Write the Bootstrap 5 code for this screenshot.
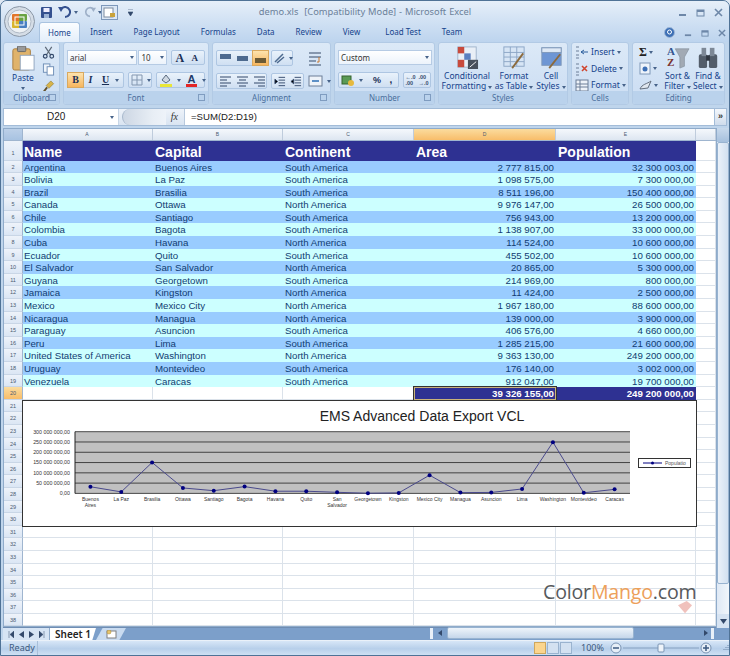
<!DOCTYPE html>
<html lang="en">
<head>
<meta charset="UTF-8">
<title>demo.xls [Compatibility Mode] - Microsoft Excel</title>
<link href="https://cdn.jsdelivr.net/npm/bootstrap@5.3.0/dist/css/bootstrap.min.css" rel="stylesheet">
<style>
html, body { margin: 0; height: 656px; overflow: hidden; background: #dfe8f3; }
svg { display: block; flex: none; }
.win { position: relative; width: 730px; height: 656px; background: #bfd5ec; border: 1px solid #4f7296; border-radius: 7px 7px 0 0; overflow: hidden; font-family: "Noto Sans", sans-serif; color: #15428b; }
.titlebar { height: 22px; background: linear-gradient(#e6eff9, #cfe0f3); padding-left: 40px; padding-right: 6px; }
.title { position: absolute; left: 0; right: 0; top: 4px; text-align: center; font-size: 9.3px; line-height: 14px; color: #6b7f99; word-spacing: .5px; }
.qat { height: 20px; gap: 2px; padding-right: 10px; }
.qat .pv { margin-left: -3px; }
.office { position: absolute; left: 3px; top: 5px; width: 31px; height: 31px; }
.wctl { margin-left: auto; gap: 9px; }
.tabsrow { height: 19px; padding-left: 38px; padding-right: 3px; background: linear-gradient(#cfe0f3, #bdd4ee); }
.tabsrow .nav-link { color: #15428b; font-size: 8px; line-height: 12px; padding: 4px 10.5px 3px; border: 0; }
.tabsrow .nav-link.active { background: linear-gradient(#fbfdff, #e3eefa); border: 1px solid #a9c3e0; border-bottom: 0; border-radius: 3px 3px 0 0; color: #15428b; padding: 4px 8px 3px; }
.ribbon { height: 63px; padding: 0 2px; gap: 3px; background: #bfd5ec; }
.grp { display: flex; flex-direction: column; height: 63px; background: linear-gradient(#dce9f7, #cfe0f4 70%); border: 1px solid #b2cae5; border-radius: 3px; flex: none; }
.grp-body { flex: 1; position: relative; padding: 7px 3px 0; min-height: 0; }
.two-rows { display: flex; flex-direction: column; gap: 7px; }
.grp-label { height: 13px; background: #bad2ec; font-size: 8px; line-height: 13px; text-align: center; color: #4a6f9c; position: relative; border-radius: 0 0 2px 2px; }
.launch { position: absolute; right: 3px; top: 3px; width: 7px; height: 7px; border: 1px solid #7f9cc0; }
.combo { height: 15px; background: linear-gradient(#fff, #ecf3fb); border: 1px solid #b6cbe4; font-size: 8px; line-height: 13px; padding: 0 2px; color: #333; display: flex; justify-content: space-between; align-items: center; }
.caret { width: 0; height: 0; border: 2.5px solid transparent; border-top: 3px solid #47638a; border-bottom: 0; flex: none; }
.bgroup { display: flex; align-items: center; height: 16px; background: linear-gradient(#e9f2fb, #cfdff2); border: 1px solid #aec6e2; border-radius: 2px; }
.bgroup > * { margin: 0 2px; }
.hot { background: linear-gradient(#fde3ad, #f7b65f); outline: 1px solid #d9a95f; }
.b-ch { width: 15px; height: 14px; font: bold 10px/14px "Liberation Serif", serif; color: #1a2f55; text-align: center; margin: 0; }
.big { font-size: 8.5px; line-height: 10px; text-align: center; display: flex; flex-direction: column; align-items: center; color: #15428b; white-space: nowrap; }
.big .lbl { margin-top: 2px; }
.small-row { font-size: 8.5px; line-height: 10px; gap: 2px; height: 16.5px; color: #15428b; }
.fbar { height: 18px; margin: 3px 2px 0; background: #fff; border: 1px solid #a3bcd8; }
.namebox { width: 115px; font: 10px/16px "Liberation Sans", sans-serif; color: #222; padding-left: 43px; position: relative; border-right: 1px solid #c8d6e6; }
.fx-zone { width: 66px; background: linear-gradient(#eef3f9, #d9e4f1); position: relative; border-right: 1px solid #b8c9dd; font: italic 10px/16px "Liberation Serif", serif; text-align: right; padding-right: 6px; color: #333; }
.fx-zone span { position: absolute; left: 3px; top: 0; width: 44px; height: 16px; border-radius: 8px 0 0 8px; background: linear-gradient(90deg, #cdd7e4, #e8eef5 70%, #eef3f9); border-left: 1px solid #a6b7cb; }
.ftext { flex: 1; font: 9.6px/16px "Liberation Sans", sans-serif; padding-left: 6px; color: #222; }
.fexp { width: 12px; background: linear-gradient(#f3f7fc, #cfdcec); border-left: 1px solid #a3bcd8; font: bold 9px/14px "Liberation Sans", sans-serif; text-align: center; color: #333; }
.sheetwrap { height: 499px; margin-top: 2px; background: #fff; border: 1px solid #8fabca; border-right: 0; margin-left: 2px; position: relative; overflow: hidden; }
.colhead { height: 12px; background: linear-gradient(#f5f8fc, #dde6f1); border-bottom: 1px solid #9fb5cf; font: 5px/11px "Liberation Sans", sans-serif; color: #4a5a70; }
.corner { width: 19px; background: linear-gradient(#bcd0e8, #a8c3e2); border-right: 1px solid #9fb5cf; flex: none; }
.c-a { width: 130px; } .c-b { width: 130px; } .c-c { width: 131px; } .c-d { width: 142px; } .c-e { width: 140px; } .c-f { width: 20px; }
.cell { flex: none; border-right: 1px solid #dbe2ea; border-bottom: 1px solid #dbe2ea; overflow: hidden; white-space: nowrap; padding: 0 2px; }
.c-a { padding-left: 1px; }
.colhead .cell { text-align: center; border-right: 1px solid #bfccdc; border-bottom: 0; }
.colhead .on { background: linear-gradient(#fbdc9e, #f8bd6a); }
.gridrows { font: 9.7px/13px "Liberation Sans", sans-serif; color: #103c72; }
.rw { height: 12.6px; display: flex; }
.rw .num { width: 19px; flex: none; background: linear-gradient(#eef3fa, #dbe6f4); border-right: 1px solid #9fb5cf; border-bottom: 1px solid #c9d6e6; font: 5.5px/12px "Liberation Sans", sans-serif; color: #4a5a70; text-align: center; }
.rw .num.on { background: linear-gradient(#fbdc9e, #f8bd6a); }
.rw.head { height: 19.5px; }
.rw.head .num { line-height: 24px; }
.rw.head .cell { background: #2e3192; color: #fff; font: bold 14px/22px "Liberation Sans", sans-serif; border: 0; }
.rw.head .r { text-align: left; }
.rw.head .c-f { background: none; border-right: 1px solid #dbe2ea; border-bottom: 1px solid #dbe2ea; }
.rw.blue .cell:not(.c-f) { background: #99ccff; border: 0; }
.rw.cyan .cell:not(.c-f) { background: #ccffff; border: 0; }
.r { text-align: right; }
.rw.total .c-d, .rw.total .c-e { background: #2e3192; color: #fff; font-weight: bold; border: 0; }
.rw.total .c-d { box-shadow: inset 0 0 0 1px #c9b27a; outline: 1px solid #333; outline-offset: 0; position: relative; }
.chart { position: absolute; left: 18px; top: 271px; }
.vbar { position: absolute; right: 0; top: 127px; width: 13px; height: 500px; background: linear-gradient(90deg, #dfe9f5, #f1f6fb); border-left: 1px solid #8fabca; }
.vbar i { display: block; position: absolute; left: 0; right: 0; }
.vbar .btn-up { top: 0; height: 14px; background: linear-gradient(#c8d9ec, #a6c0dd); }
.vbar .thumb { top: 14px; height: 442px; background: linear-gradient(90deg, #eaf1f9, #d2e0f0); border: 1px solid #98b3d0; border-radius: 2px; }
.vbar .btn-dn { bottom: 0; height: 14px; background: #d6e3f2; }
.vbar .dn { position: absolute; left: 3px; bottom: 4px; }
.tabstrip { height: 13px; margin-left: 2px; background: #7c9fca; border-top: 1px solid #6f8db3; font-size: 8px; }
.nav-arrows { width: 47px; height: 12px; background: #d6e4f4; gap: 5px; padding-left: 5px; border-right: 1px solid #8fabca; }
.sheet-tab { width: 46px; background: #fff; font: 600 10px/12px "Noto Sans", sans-serif; color: #222; text-align: center; clip-path: polygon(0 0, 100% 0, 92% 100%, 0 100%); }
.new-tab { width: 30px; background: #c9dbf0; clip-path: polygon(22% 0, 100% 0, 78% 100%, 0 100%); }
.hbar { position: absolute; right: 1px; bottom: 16px; width: 298px; height: 12px; }
.hbar .split { position: absolute; top: 1px; width: 3px; height: 11px; background: #e9f0f8; }
.hbar .thumb { position: absolute; left: 17px; width: 187px; top: 0; bottom: 0; background: linear-gradient(#eef4fa, #c5d6ea); border: 1px solid #98b3d0; border-radius: 2px; }
.hbar svg { position: absolute; top: 3px; }
.statusbar { height: 15px; background: linear-gradient(#d7e6f7, #b7cfea 55%, #cfe0f3); border-top: 1px solid #eaf1f9; font: 9px/14px "Noto Sans", sans-serif; color: #3d5a80; }
.status-ready { width: 37px; padding-left: 8px; border-right: 1px solid #a8bfd9; }
.zoombar { margin-left: auto; gap: 1px; padding-right: 0; }
.view { width: 12px; height: 12px; background: #d3e1f1; border: 1px solid #9ab3cf; }
.view.sel { background: #fbd58e; border-color: #cfa75c; }
.watermark { position: absolute; left: 542px; top: 576px; font: 19.6px/30px "Open Sans", sans-serif; color: #57595c; letter-spacing: -.2px; }
.watermark b { font-weight: 400; color: #eda05a; }
.mango { position: absolute; left: 675px; top: 599px; opacity: .55; }
</style>
</head>
<body>
<div class="win d-flex flex-column">

  <svg class="office" viewBox="0 0 31 31" style="z-index:3">
    <circle cx="15.5" cy="15.5" r="15" fill="#d5dde6" stroke="#8a97a6"/>
    <circle cx="15.5" cy="15.5" r="11.5" fill="#eef2f5" stroke="#aeb8c4"/>
    <rect x="8" y="8" width="8" height="7" rx="1" fill="#e2762a"/>
    <rect x="15" y="8" width="8" height="7" rx="1" fill="#6aa342"/>
    <rect x="8" y="15" width="8" height="7" rx="1" fill="#d9b52e"/>
    <rect x="15" y="15" width="8" height="7" rx="1" fill="#4a7fc1"/>
    <rect x="11" y="11" width="9" height="8" fill="none" stroke="#fff"/>
  </svg>

  <div class="titlebar d-flex align-items-center">
    <div class="qat d-flex align-items-center">
      <svg width="11" height="11" viewBox="0 0 11 11"><rect width="11" height="11" rx="1" fill="#35518f"/><rect x="2.5" y="1" width="6" height="4" fill="#eef"/><rect x="3" y="7" width="5" height="4" fill="#9db4d6"/></svg>
      <svg class="ms-1" width="14" height="12" viewBox="0 0 14 12"><path d="M3 3 A5 5 0 1 1 7 11" fill="none" stroke="#35518f" stroke-width="2"/><path d="M0 1 L6 1 L3 6Z" fill="#35518f"/></svg>
      <div class="caret"></div>
      <svg class="ms-1" width="12" height="12" viewBox="0 0 14 12"><path d="M11 3 A5 5 0 1 0 7 11" fill="none" stroke="#9eb0c8" stroke-width="2"/><path d="M14 1 L8 1 L11 6Z" fill="#9eb0c8"/></svg>
      <div class="caret"></div>
      <svg class="pv" width="17" height="15" viewBox="0 0 17 15"><rect x=".5" y=".5" width="16" height="14" fill="#dbe7f5" stroke="#7d98bb"/><rect x="3" y="3" width="9" height="9" fill="#fff" stroke="#7c8ba0"/><rect x="9" y="8" width="5" height="4" fill="#c9a23a"/></svg>
    </div>
    <svg width="5" height="7" viewBox="0 0 5 7"><path d="M0 0H5M0 3H5L2.5 7Z" fill="#33496b" stroke="#33496b" stroke-width=".6"/></svg>
    <div class="title">demo.xls&nbsp; [Compatibility Mode] - Microsoft Excel</div>
    <div class="wctl d-flex align-items-center">
      <svg width="9" height="9" viewBox="0 0 9 9"><rect x="1" y="6" width="7" height="2" fill="#6d87a8"/></svg>
      <svg width="9" height="9" viewBox="0 0 9 9"><rect x="1" y="2" width="7" height="6" fill="none" stroke="#6d87a8"/><rect x="1" y="2" width="7" height="2" fill="#6d87a8"/></svg>
      <svg width="9" height="9" viewBox="0 0 9 9"><path d="M1 1L8 8M8 1L1 8" stroke="#6d87a8" stroke-width="1.6"/></svg>
    </div>
  </div>

  <div class="tabsrow d-flex align-items-end">
    <ul class="nav flex-nowrap">
      <li class="nav-item"><a class="nav-link active">Home</a></li>
      <li class="nav-item"><a class="nav-link">Insert</a></li>
      <li class="nav-item"><a class="nav-link">Page Layout</a></li>
      <li class="nav-item"><a class="nav-link">Formulas</a></li>
      <li class="nav-item"><a class="nav-link">Data</a></li>
      <li class="nav-item"><a class="nav-link">Review</a></li>
      <li class="nav-item"><a class="nav-link">View</a></li>
      <li class="nav-item ms-1"><a class="nav-link">Load Test</a></li>
      <li class="nav-item"><a class="nav-link">Team</a></li>
    </ul>
    <div class="wctl d-flex align-items-center mb-1">
      <svg width="11" height="11" viewBox="0 0 11 11"><circle cx="5.5" cy="5.5" r="5" fill="#3c6fb5" stroke="#9fb8d8"/><circle cx="5.5" cy="5" r="2" fill="none" stroke="#fff"/></svg>
      <svg width="8" height="8" viewBox="0 0 9 9"><rect x="1" y="6" width="7" height="2" fill="#6d87a8"/></svg>
      <svg width="8" height="8" viewBox="0 0 9 9"><rect x="1" y="2" width="7" height="6" fill="none" stroke="#6d87a8"/><rect x="1" y="2" width="7" height="2" fill="#6d87a8"/></svg>
      <svg width="8" height="8" viewBox="0 0 9 9"><path d="M1 1L8 8M8 1L1 8" stroke="#6d87a8" stroke-width="1.6"/></svg>
    </div>
  </div>

  <div class="ribbon d-flex">
    <!-- Clipboard -->
    <div class="grp" style="width:57px">
      <div class="grp-body d-flex justify-content-between" style="padding-top:3px">
        <div class="big" style="width:32px">
          <svg width="24" height="25" viewBox="0 0 26 27"><rect x="2" y="3" width="19" height="23" rx="2" fill="#e0b36b" stroke="#a87c3c"/><rect x="7" y="0" width="9" height="6" rx="1" fill="#9a9a9a" stroke="#666"/><rect x="10" y="10" width="15" height="16" fill="#fff" stroke="#8da3bf"/></svg>
          <span class="lbl">Paste</span>
          <div class="caret mt-1"></div>
        </div>
        <div class="d-flex flex-column gap-1 pt-0" style="margin-right:1px">
          <svg width="13" height="13" viewBox="0 0 13 14"><path d="M3 1L9 10M10 1L4 10" stroke="#5e6a78" stroke-width="1.3"/><circle cx="3" cy="11" r="2" fill="none" stroke="#33496b" stroke-width="1.3"/><circle cx="10" cy="11" r="2" fill="none" stroke="#33496b" stroke-width="1.3"/></svg>
          <svg width="13" height="13" viewBox="0 0 13 14"><rect x="1" y="1" width="7" height="9" fill="#eef4fb" stroke="#6c8cb5"/><rect x="5" y="4" width="7" height="9" fill="#fff" stroke="#6c8cb5"/></svg>
          <svg width="13" height="13" viewBox="0 0 13 14"><path d="M9 1L12 4L7 9L4 6Z" fill="#d8b44a" stroke="#8b7427" stroke-width=".6"/><path d="M5 8L1 13" stroke="#62502a" stroke-width="2"/></svg>
        </div>
      </div>
      <div class="grp-label">Clipboard<span class="launch"></span></div>
    </div>
    <!-- Font -->
    <div class="grp" style="width:146px">
      <div class="grp-body two-rows">
        <div class="d-flex gap-1">
          <div class="combo" style="width:71px">arial<div class="caret"></div></div>
          <div class="combo" style="width:29px;margin-left:-3px">10<div class="caret"></div></div>
          <div class="bgroup" style="width:34px;height:15px">
            <span class="b-ch" style="font-size:12px">A</span><span class="b-ch" style="font-size:9px">A</span>
          </div>
        </div>
        <div class="d-flex gap-1">
          <div class="bgroup" style="width:60px">
            <span class="b-ch hot">B</span><span class="b-ch fst-italic">I</span><span class="b-ch text-decoration-underline">U</span><div class="caret"></div>
          </div>
          <div class="bgroup" style="width:24px">
            <svg width="12" height="12" viewBox="0 0 12 12"><path d="M1 1H11V11H1ZM6 1V11M1 6H11" fill="none" stroke="#8397b0"/></svg><div class="caret"></div>
          </div>
          <div class="bgroup" style="width:49px">
            <svg width="14" height="14" viewBox="0 0 14 14"><path d="M3 7L7 2L11 7L7 10Z" fill="#cfd8e2" stroke="#5a6b80"/><rect x="1" y="11" width="12" height="3" fill="#e9e637"/></svg><div class="caret"></div>
            <svg width="13" height="14" viewBox="0 0 13 14"><text x="6.5" y="10" text-anchor="middle" font-family="Liberation Sans" font-weight="bold" font-size="11" fill="#223c6b">A</text><rect x="1" y="11" width="11" height="3" fill="#e32626"/></svg><div class="caret"></div>
          </div>
        </div>
      </div>
      <div class="grp-label">Font<span class="launch"></span></div>
    </div>
    <!-- Alignment -->
    <div class="grp" style="width:119px">
      <div class="grp-body two-rows">
        <div class="d-flex gap-1 align-items-center">
          <div class="bgroup" style="width:51px">
            <svg width="13" height="13" viewBox="0 0 13 13"><rect x="1" y="2" width="11" height="5" fill="#4d6a8f"/></svg>
            <svg width="13" height="13" viewBox="0 0 13 13"><rect x="1" y="4" width="11" height="5" fill="#4d6a8f"/></svg>
            <svg class="hot" width="15" height="14" viewBox="0 0 15 14"><rect x="2" y="7" width="11" height="5" fill="#6b5a35"/></svg>
          </div>
          <div class="bgroup" style="width:22px">
            <svg width="11" height="12" viewBox="0 0 11 12"><path d="M1 10L9 2M3 11L10 5" stroke="#4d6a8f" stroke-width="1.5"/></svg><div class="caret"></div>
          </div>
          <svg class="ms-auto me-1" width="16" height="15" viewBox="0 0 16 15"><path d="M2 2H14M2 6H14M2 10H9M2 14H14" stroke="#6c7f98" stroke-width="1.5"/><path d="M12 6V11H10" fill="none" stroke="#c9762c"/></svg>
        </div>
        <div class="d-flex gap-1 align-items-center">
          <div class="bgroup" style="width:51px">
            <svg width="13" height="13" viewBox="0 0 13 13"><path d="M1 2H12M1 5H8M1 8H12M1 11H8" stroke="#33496b" stroke-width="1.2"/></svg>
            <svg width="13" height="13" viewBox="0 0 13 13"><path d="M1 2H12M3 5H10M1 8H12M3 11H10" stroke="#33496b" stroke-width="1.2"/></svg>
            <svg width="13" height="13" viewBox="0 0 13 13"><path d="M1 2H12M5 5H12M1 8H12M5 11H12" stroke="#33496b" stroke-width="1.2"/></svg>
          </div>
          <div class="bgroup" style="width:33px">
            <svg width="12" height="13" viewBox="0 0 13 13"><path d="M5 2H12M5 5H12M5 8H12M5 11H12M1 4V9L4 6.5Z" stroke="#33496b"/></svg>
            <svg width="12" height="13" viewBox="0 0 13 13"><path d="M5 2H12M5 5H12M5 8H12M5 11H12M4 4V9L1 6.5Z" stroke="#33496b"/></svg>
          </div>
          <svg class="ms-auto" width="15" height="14" viewBox="0 0 15 14"><rect x="1" y="2" width="13" height="10" fill="#eef3f9" stroke="#6c7f98"/><path d="M4 7H11" stroke="#2d6fb5" stroke-width="1.6"/></svg>
          <div class="caret me-1"></div>
        </div>
      </div>
      <div class="grp-label">Alignment<span class="launch"></span></div>
    </div>
    <!-- Number -->
    <div class="grp" style="width:101px">
      <div class="grp-body two-rows">
        <div class="combo" style="width:94px">Custom<div class="caret"></div></div>
        <div class="d-flex gap-1">
          <div class="bgroup" style="width:61px">
            <svg width="14" height="13" viewBox="0 0 14 13"><rect x="1" y="2" width="9" height="8" fill="#5a9a55" stroke="#35632f"/><circle cx="10" cy="9" r="3" fill="#e6b93e"/></svg><div class="caret"></div>
            <span class="b-ch" style="font:bold 9px/14px 'Liberation Sans',sans-serif;margin-left:5px">%</span>
            <span class="b-ch" style="font-family:'Liberation Sans',sans-serif">,</span>
          </div>
          <div class="bgroup flex-grow-1" style="font:bold 5.5px/6.5px 'Liberation Sans',sans-serif;color:#33496b;justify-content:space-around">
            <span class="m-0">←.0<br>.00</span><span class="m-0">.00<br>→.0</span>
          </div>
        </div>
      </div>
      <div class="grp-label">Number<span class="launch"></span></div>
    </div>
    <!-- Styles -->
    <div class="grp" style="width:130px">
      <div class="grp-body d-flex justify-content-between" style="padding:3px 0 0 2px">
        <div class="big" style="width:52px">
          <svg width="24" height="23" viewBox="0 0 24 25"><rect x="2" y="1" width="20" height="22" fill="#e9eff7" stroke="#9fb2ca"/><rect x="2" y="1" width="7" height="7" fill="#c84a3c"/><rect x="9" y="8" width="7" height="7" fill="#5a7fc0"/><rect x="2" y="15" width="7" height="8" fill="#c84a3c"/><rect x="13" y="15" width="11" height="10" fill="#48505c"/><path d="M15 23L22 17" stroke="#fff"/></svg>
          <span class="lbl">Conditional<br>Formatting <i class="caret d-inline-block"></i></span>
        </div>
        <div class="big" style="width:40px">
          <svg width="24" height="23" viewBox="0 0 24 25"><rect x="1" y="1" width="22" height="21" fill="#d7e5f5" stroke="#8aa4c4"/><path d="M1 7H23M1 12H23M1 17H23M8 1V22M15 1V22" stroke="#8aa4c4"/><path d="M10 24L22 8" stroke="#8c6a3c" stroke-width="2"/></svg>
          <span class="lbl">Format<br>as Table <i class="caret d-inline-block"></i></span>
        </div>
        <div class="big" style="width:32px">
          <svg width="23" height="23" viewBox="0 0 23 25"><rect x="1" y="2" width="21" height="19" fill="#6e96d4" stroke="#7f98b8"/><rect x="1" y="2" width="21" height="5" fill="#dfe9f5" stroke="#7f98b8"/><path d="M9 24L21 9" stroke="#8c6a3c" stroke-width="2"/></svg>
          <span class="lbl">Cell<br>Styles <i class="caret d-inline-block"></i></span>
        </div>
      </div>
      <div class="grp-label">Styles</div>
    </div>
    <!-- Cells -->
    <div class="grp" style="width:58px">
      <div class="grp-body" style="padding:1px 3px 0">
        <div class="small-row d-flex align-items-center">
          <svg width="14" height="14" viewBox="0 0 14 14"><path d="M1 2H4M1 6H4M1 10H4M1 13H4" stroke="#6c7f98"/><path d="M6 7H13M9 5L6 7L9 9" stroke="#2d5f9d" fill="none"/></svg>Insert<div class="caret"></div>
        </div>
        <div class="small-row d-flex align-items-center">
          <svg width="14" height="14" viewBox="0 0 14 14"><path d="M1 2H4M1 6H4M1 10H4M1 13H4" stroke="#6c7f98"/><path d="M7 4L12 9M12 4L7 9" stroke="#d0452e" stroke-width="1.6"/></svg>Delete<div class="caret"></div>
        </div>
        <div class="small-row d-flex align-items-center">
          <svg width="14" height="14" viewBox="0 0 14 14"><rect x="1" y="2" width="12" height="11" fill="#eef3f9" stroke="#6c7f98"/><path d="M1 6H13M1 9H13M5 2V13" stroke="#6c7f98"/></svg>Format<div class="caret"></div>
        </div>
      </div>
      <div class="grp-label">Cells</div>
    </div>
    <!-- Editing -->
    <div class="grp" style="width:93px">
      <div class="grp-body d-flex" style="padding:1px 1px 0 6px">
        <div style="width:23px">
          <div class="small-row d-flex align-items-center"><span style="font:bold 12px/14px 'Liberation Serif',serif;color:#222">Σ</span><div class="caret"></div></div>
          <div class="small-row d-flex align-items-center"><svg width="12" height="13" viewBox="0 0 12 13"><rect x="1" y="1" width="10" height="11" fill="#eef4fb" stroke="#7f98b8"/><circle cx="6" cy="7" r="2.5" fill="#3c6fb5"/></svg><div class="caret"></div></div>
          <div class="small-row d-flex align-items-center"><svg width="13" height="12" viewBox="0 0 13 12"><path d="M1 10C3 5 8 5 12 2L9 9Z" fill="#dfe6ee" stroke="#646f7e"/></svg><div class="caret"></div></div>
        </div>
        <div class="big" style="width:31px;padding-top:2px">
          <svg width="26" height="23" viewBox="0 0 26 25"><text x="1" y="10" font-family="Liberation Serif" font-weight="bold" font-size="12" fill="#34558f">A</text><text x="1" y="22" font-family="Liberation Serif" font-weight="bold" font-size="12" fill="#7a3330">Z</text><path d="M10 3H25L20 12V22L15 24V12Z" fill="#a2aab4" stroke="#7a8694" stroke-width=".6"/></svg>
          <span class="lbl">Sort &amp;<br>Filter <i class="caret d-inline-block"></i></span>
        </div>
        <div class="big" style="width:30px;padding-top:2px">
          <svg width="24" height="23" viewBox="0 0 24 25"><rect x="2" y="9" width="9" height="15" rx="2" fill="#535d6a"/><rect x="13" y="9" width="9" height="15" rx="2" fill="#535d6a"/><rect x="5" y="2" width="5" height="9" fill="#7d8896"/><rect x="14" y="2" width="5" height="9" fill="#7d8896"/><rect x="10" y="10" width="4" height="6" fill="#2f3640"/></svg>
          <span class="lbl">Find &amp;<br>Select <i class="caret d-inline-block"></i></span>
        </div>
      </div>
      <div class="grp-label">Editing</div>
    </div>
  </div>

  <div class="fbar d-flex">
    <div class="namebox">D20<div class="caret" style="position:absolute;right:4px;top:7px"></div></div>
    <div class="fx-zone"><span></span>fx</div>
    <div class="ftext">=SUM(D2:D19)</div>
    <div class="fexp">»</div>
  </div>

  <div class="sheetwrap">
    <div class="colhead d-flex">
      <div class="corner"></div>
      <div class="cell c-a">A</div><div class="cell c-b">B</div><div class="cell c-c">C</div><div class="cell c-d on">D</div><div class="cell c-e">E</div><div class="cell c-f"></div>
    </div>
    <div class="gridrows" id="rows"></div>
    <svg class="chart" id="chart" width="675" height="127" viewBox="22 400 675 127"></svg>
  </div>

  <div class="tabstrip d-flex">
    <div class="nav-arrows d-flex align-items-center">
      <svg width="6" height="7" viewBox="0 0 6 7"><path d="M1 0V7M6 0V7L2 3.5Z" fill="#33496b" stroke="#33496b" stroke-width=".5"/></svg>
      <svg width="5" height="7" viewBox="0 0 5 7"><path d="M5 0V7L0 3.5Z" fill="#33496b"/></svg>
      <svg width="5" height="7" viewBox="0 0 5 7"><path d="M0 0V7L5 3.5Z" fill="#33496b"/></svg>
      <svg width="6" height="7" viewBox="0 0 6 7"><path d="M5 0V7M0 0V7L4 3.5Z" fill="#33496b" stroke="#33496b" stroke-width=".5"/></svg>
    </div>
    <div class="sheet-tab">Sheet 1</div>
    <div class="new-tab d-flex align-items-center justify-content-center"><svg width="11" height="9" viewBox="0 0 11 9"><rect x="1" y="1" width="9" height="7" fill="#fff" stroke="#7f7f7f"/><circle cx="3" cy="2" r="2" fill="#e6c46c" stroke="#a8842d" stroke-width=".5"/></svg></div>
  </div>

  <div class="statusbar d-flex align-items-center">
    <div class="status-ready">Ready</div>
    <div class="zoombar d-flex align-items-center">
      <div class="view sel"></div><div class="view"></div><div class="view"></div>
      <span style="margin:0 5px 0 8px">100%</span>
      <svg width="12" height="12" viewBox="0 0 12 12"><circle cx="6" cy="6" r="5" fill="#e6eef7" stroke="#7993b3"/><path d="M3 6H9" stroke="#3d5a80" stroke-width="1.5"/></svg>
      <svg width="76" height="10" viewBox="0 0 76 10"><path d="M0 5H76" stroke="#86a0c0"/><rect x="35" y="1" width="6" height="8" rx="1" fill="#eef3f9" stroke="#7993b3"/></svg>
      <svg width="12" height="12" viewBox="0 0 12 12"><circle cx="6" cy="6" r="5" fill="#e6eef7" stroke="#7993b3"/><path d="M3 6H9M6 3V9" stroke="#3d5a80" stroke-width="1.5"/></svg>
      <svg class="ms-2" width="8" height="8" viewBox="0 0 8 8"><path d="M7 1V2M5 3V4M7 3V4M3 5V6M5 5V6M7 5V6" stroke="#6b87a8"/></svg>
    </div>
  </div>

  <!-- scrollbars sit over the sheet frame -->
  <div class="vbar"><i class="btn-up"></i><i class="thumb"></i><i class="btn-dn"></i>
    <svg class="dn" width="7" height="5" viewBox="0 0 7 5"><path d="M0 0H7L3.5 5Z" fill="#33496b"/></svg>
  </div>
  <div class="hbar">
    <div class="split" style="left:0"></div>
    <svg style="left:8px" width="4" height="6" viewBox="0 0 4 6"><path d="M4 0V6L0 3Z" fill="#33496b"/></svg>
    <div class="thumb"></div>
    <svg style="left:274px" width="4" height="6" viewBox="0 0 4 6"><path d="M0 0V6L4 3Z" fill="#33496b"/></svg>
    <div class="split" style="left:281px"></div>
  </div>

  <div class="watermark">Color<b>Mango</b>.com</div>
  <svg class="mango" width="18" height="14" viewBox="0 0 20 16"><path d="M2 6L12 1L18 6L10 15Z" fill="#e58f86"/></svg>
</div>

<script>
const countries = [
  ['Argentina','Buenos Aires','South America','2 777 815,00','32 300 003,00'],
  ['Bolivia','La Paz','South America','1 098 575,00','7 300 000,00'],
  ['Brazil','Brasilia','South America','8 511 196,00','150 400 000,00'],
  ['Canada','Ottawa','North America','9 976 147,00','26 500 000,00'],
  ['Chile','Santiago','South America','756 943,00','13 200 000,00'],
  ['Colombia','Bagota','South America','1 138 907,00','33 000 000,00'],
  ['Cuba','Havana','North America','114 524,00','10 600 000,00'],
  ['Ecuador','Quito','South America','455 502,00','10 600 000,00'],
  ['El Salvador','San Salvador','North America','20 865,00','5 300 000,00'],
  ['Guyana','Georgetown','South America','214 969,00','800 000,00'],
  ['Jamaica','Kingston','North America','11 424,00','2 500 000,00'],
  ['Mexico','Mexico City','North America','1 967 180,00','88 600 000,00'],
  ['Nicaragua','Managua','North America','139 000,00','3 900 000,00'],
  ['Paraguay','Asuncion','South America','406 576,00','4 660 000,00'],
  ['Peru','Lima','South America','1 285 215,00','21 600 000,00'],
  ['United States of America','Washington','North America','9 363 130,00','249 200 000,00'],
  ['Uruguay','Montevideo','South America','176 140,00','3 002 000,00'],
  ['Venezuela','Caracas','South America','912 047,00','19 700 000,00']
];

function row(num, cls, vals, numCls) {
  return `<div class="rw ${cls}"><div class="num ${numCls || ''}">${num}</div>` +
    `<div class="cell c-a">${vals[0]}</div><div class="cell c-b">${vals[1]}</div><div class="cell c-c">${vals[2]}</div>` +
    `<div class="cell c-d r">${vals[3]}</div><div class="cell c-e r">${vals[4]}</div><div class="cell c-f"></div></div>`;
}

let html = row(1, 'head', ['Name','Capital','Continent','Area','Population']);
countries.forEach((c, i) => { html += row(i + 2, i % 2 ? 'cyan' : 'blue', c); });
html += row(20, 'total', ['','','','39 326 155,00','249 200 000,00'], 'on');
for (let n = 21; n <= 38; n++) html += row(n, '', ['','','','','']);
document.getElementById('rows').innerHTML = html;

// chart
const labels = [['Buenos','Aires'],['La Paz'],['Brasilia'],['Ottawa'],['Santiago'],['Bagota'],['Havana'],['Quito'],['San','Salvador'],['Georgetown'],['Kingston'],['Mexico City'],['Managua'],['Asuncion'],['Lima'],['Washington'],['Montevideo'],['Caracas']];
const pop = countries.map(c => parseFloat(c[4].replace(/ /g, '').replace(',', '.')));
const L = 75, R = 630, T = 431.7, B = 493.4, step = (R - L) / 18;
let s = `<rect x="22.5" y="400.5" width="674" height="126" fill="#fff" stroke="#333"/>`;
s += `<text x="422" y="421" text-anchor="middle" font-family="Liberation Sans" font-size="14" fill="#222">EMS Advanced Data Export VCL</text>`;
s += `<rect x="${L}" y="${T}" width="${R - L}" height="${B - T}" fill="#c0c0c0"/>`;
const ticks = ['300 000 000,00','250 000 000,00','200 000 000,00','150 000 000,00','100 000 000,00','50 000 000,00','0,00'];
ticks.forEach((t, i) => {
  const y = T + (B - T) * i / 6;
  s += `<path d="M${L} ${y}H${R}" stroke="#222" stroke-width=".8"/>`;
  s += `<text x="70" y="${y + 1.8}" text-anchor="end" font-family="Liberation Sans" font-size="5.3" fill="#333">${t}</text>`;
});
s += `<path d="M${L} ${T}V${B}" stroke="#222"/>`;
const pts = pop.map((p, i) => [L + step * (i + .5), B - p / 300e6 * (B - T)]);
s += `<polyline points="${pts.map(p => p.join(',')).join(' ')}" fill="none" stroke="#4a4a8c" stroke-width="1"/>`;
pts.forEach(p => { s += `<circle cx="${p[0]}" cy="${p[1]}" r="2" fill="#000080"/>`; });
labels.forEach((l, i) => {
  l.forEach((t, j) => {
    s += `<text x="${L + step * (i + .5)}" y="${501 + j * 6}" text-anchor="middle" font-family="Liberation Sans" font-size="5" fill="#333">${t}</text>`;
  });
});
s += `<rect x="638.5" y="458.5" width="52" height="9" fill="#fff" stroke="#333"/>`;
s += `<path d="M643 463H662" stroke="#000080"/><circle cx="652.5" cy="463" r="1.5" fill="#000080"/>`;
s += `<text x="665" y="465" font-family="Liberation Sans" font-size="5" fill="#555">Populatio</text>`;
document.getElementById('chart').innerHTML = s;
</script>
<script src="https://cdn.jsdelivr.net/npm/bootstrap@5.3.0/dist/js/bootstrap.bundle.min.js"></script>
</body>
</html>
